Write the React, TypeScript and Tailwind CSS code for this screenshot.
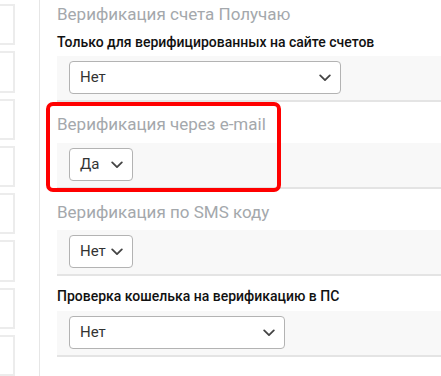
import React from "react";

function Chevron() {
  return (
    <svg width="12" height="8" viewBox="0 0 12 8" className="shrink-0">
      <path d="M1.2 1.4 L6 6.1 L10.8 1.4" fill="none" stroke="#444" strokeWidth="1.8" strokeLinecap="round" strokeLinejoin="round" />
    </svg>
  );
}

function Select({ value, width }: { value: string; width: string }) {
  return (
    <div className={`${width} h-[33px] bg-white border border-[#b3b3b3] rounded-[4px] flex items-center justify-between pl-[10px] pr-[9px]`}>
      <span className="text-[15px] text-[#333] leading-none">{value}</span>
      <Chevron />
    </div>
  );
}

function Field({ value, width }: { value: string; width: string }) {
  return (
    <div className="bg-[#f8f8f8] border-b-2 border-[#e4e4e4] pl-[12px] pt-[5px] pb-[6px]">
      <Select value={value} width={width} />
    </div>
  );
}

export default function App() {
  const cards = [0, 1, 2, 3, 4, 5, 6, 7];
  return (
    <div
      className="relative w-[441px] h-[376px] bg-white overflow-hidden flex"
      style={{ fontFamily: "Roboto, 'Liberation Sans', sans-serif" }}
    >
      <div className="w-[40px] shrink-0 border-r border-[#e6e6e6] flex flex-col gap-[6px] pt-[4px]">
        {cards.map((i) => (
          <div key={i} className="w-[15px] h-[42px] bg-white border-y-2 border-r-2 border-[#ececec]" />
        ))}
      </div>
      <div className="flex-1 pl-[17px]">
        <div className="pt-[4px] text-[17px] leading-[20px] text-[#a4a8ac]">Верификация счета Получаю</div>
        <div className="mt-[8px] text-[14px] leading-[20px] font-medium text-[#111]">
          Только для верифицированных на сайте счетов
        </div>
        <div className="mt-[4px]">
          <Field value="Нет" width="w-[272px]" />
        </div>

        <div className="pt-[12px] text-[17px] leading-[20px] text-[#a4a8ac]">Верификация через e-mail</div>
        <div className="mt-[9px]">
          <Field value="Да" width="w-[64px]" />
        </div>

        <div className="pt-[13px] text-[17px] leading-[20px] text-[#a4a8ac]">Верификация по SMS коду</div>
        <div className="mt-[8px]">
          <Field value="Нет" width="w-[64px]" />
        </div>

        <div className="pt-[10px] text-[14px] leading-[20px] font-medium text-[#111]">
          Проверка кошелька на верификацию в ПС
        </div>
        <div className="mt-[5px]">
          <Field value="Нет" width="w-[216px]" />
        </div>
      </div>
      <div className="absolute left-[46px] top-[102px] w-[235px] h-[90px] border-4 border-[#ff0000] rounded-[7px] pointer-events-none" />
    </div>
  );
}
